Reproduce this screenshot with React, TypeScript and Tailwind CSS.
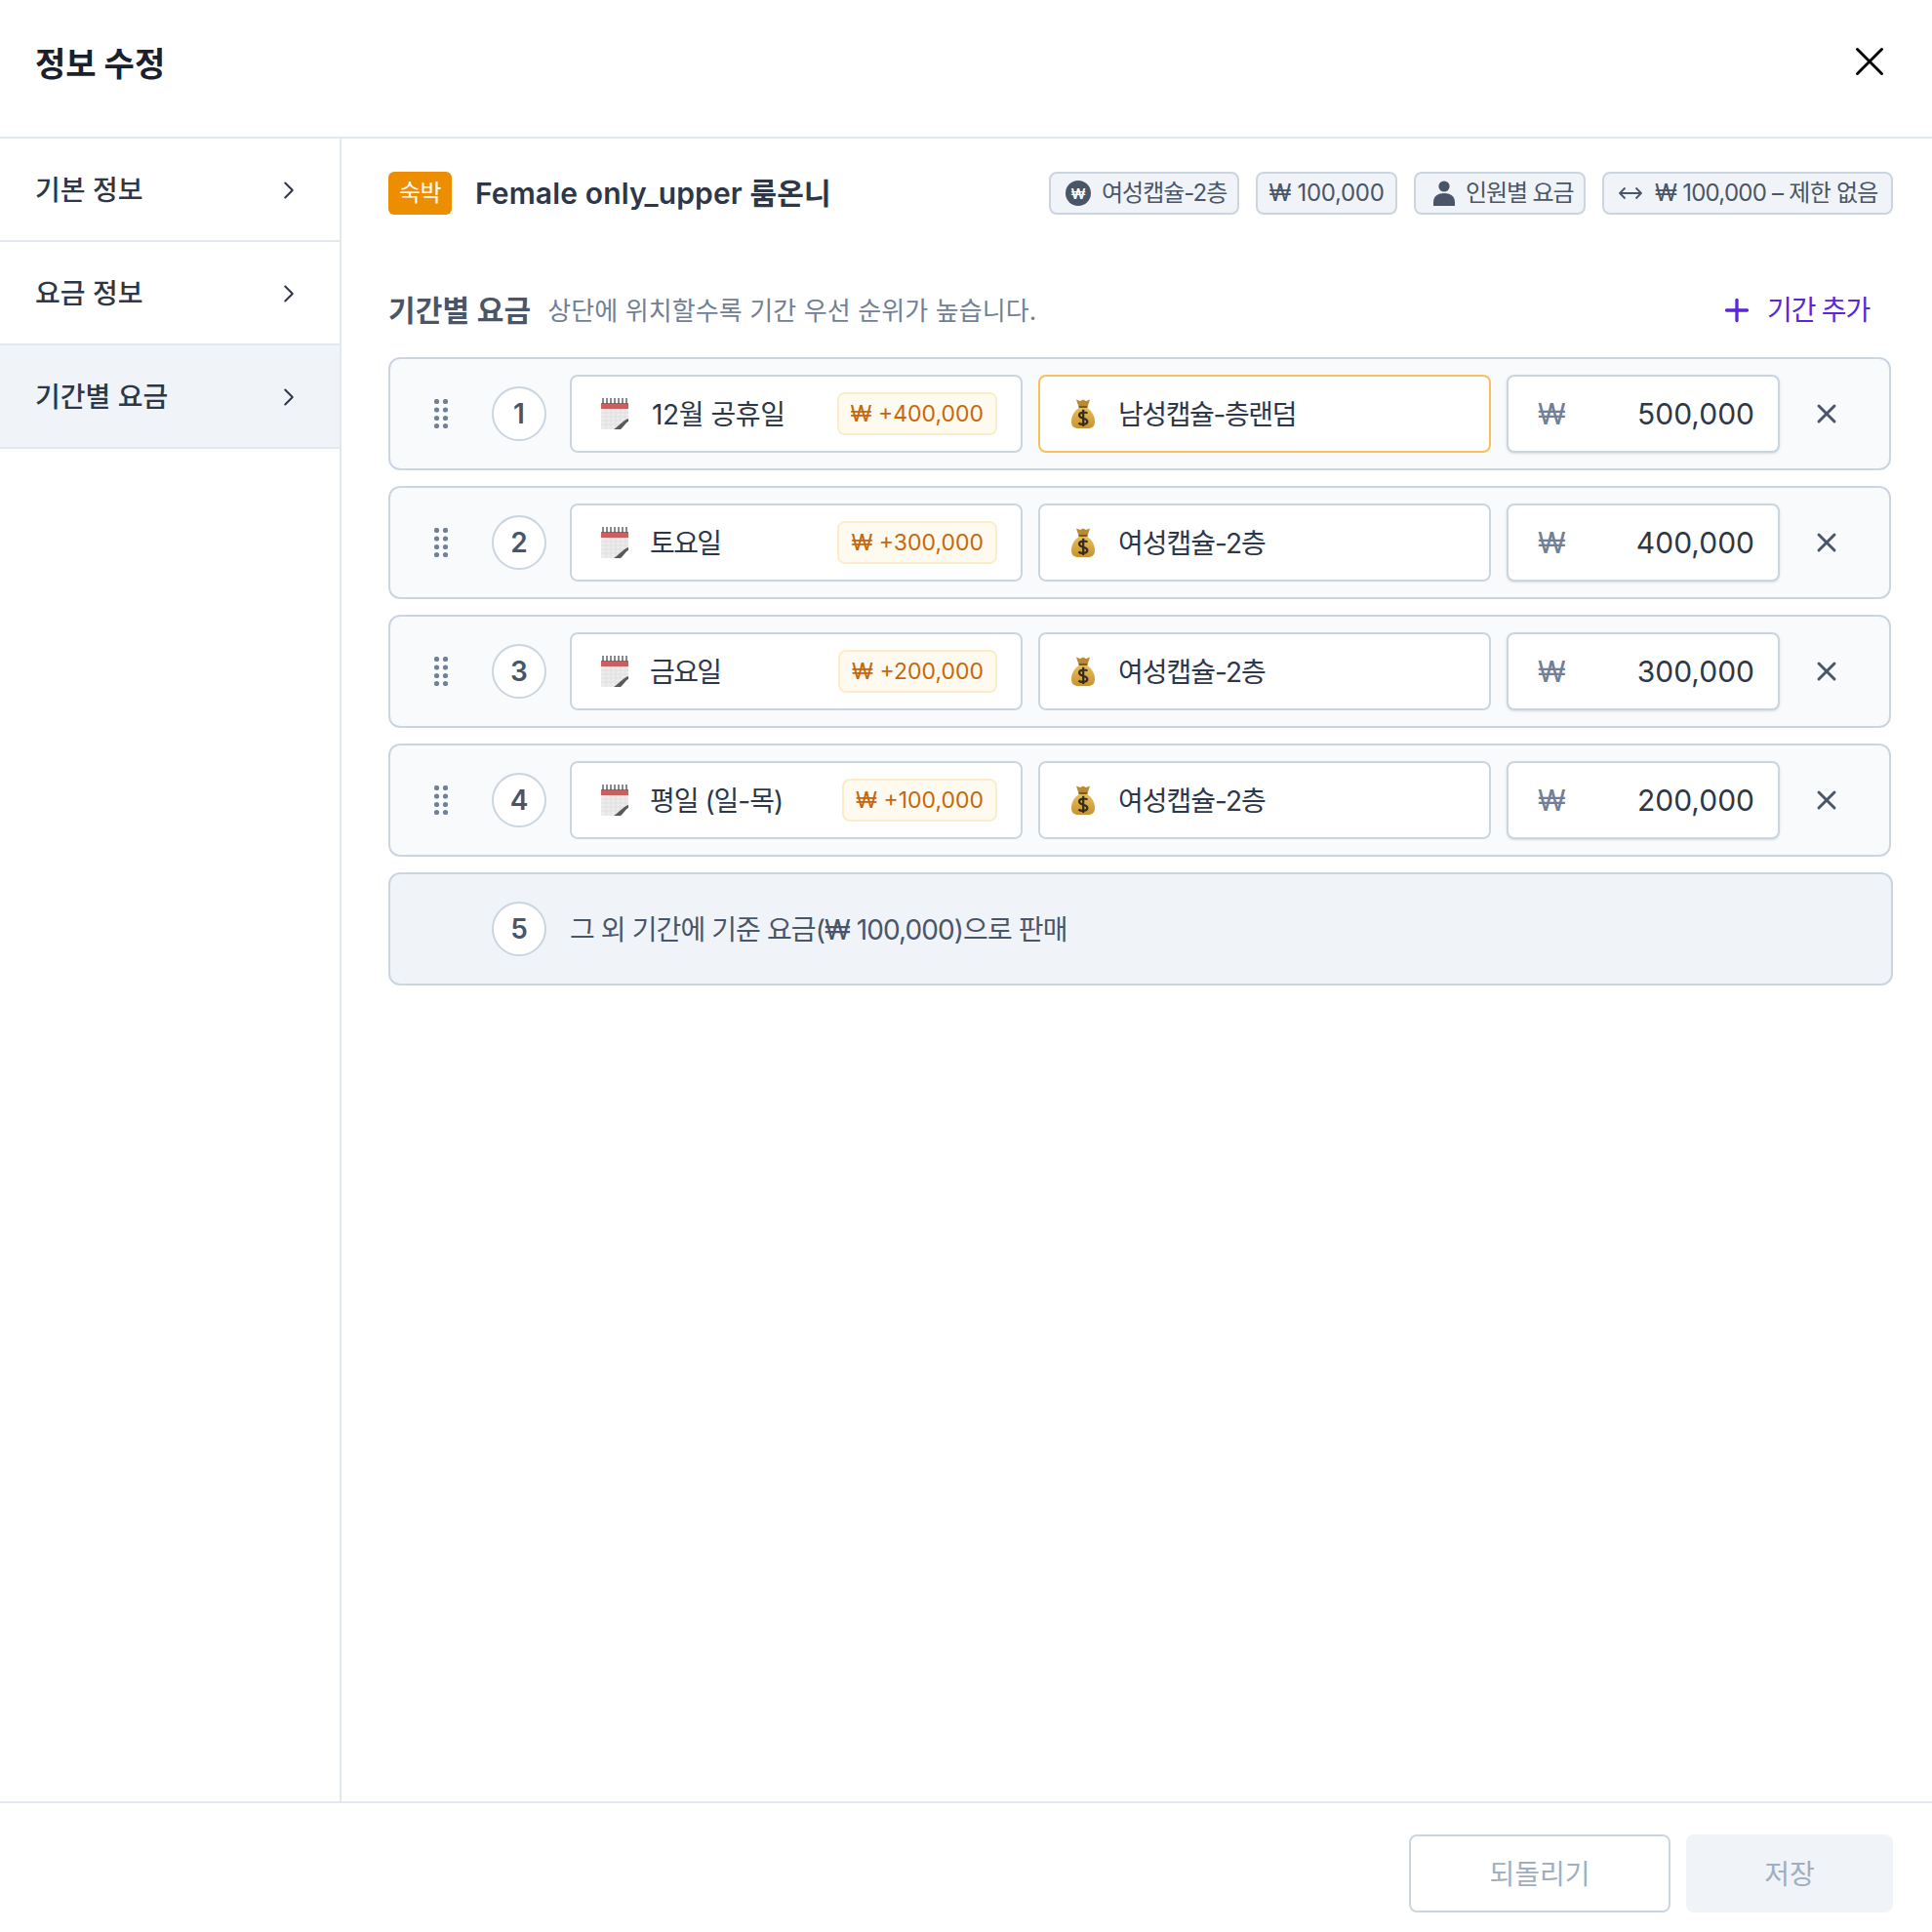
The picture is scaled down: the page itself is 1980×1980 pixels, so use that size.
import { ChevronRight, Plus, X } from 'lucide-react';

const FONT = 'font-["Inter","Noto_Sans_CJK_KR",sans-serif]';

const NAV = [
  { label: '기본 정보', active: false },
  { label: '요금 정보', active: false },
  { label: '기간별 요금', active: true },
];

const PERIODS = [
  { no: 1, name: '12월 공휴일', nameClass: 'ml-[2px] pt-[2px] tracking-[-0.4px]', extra: '₩ +400,000', room: '남성캡슐-층랜덤', roomClass: 'pt-[2px] tracking-[-1.4px]', price: '500,000', focused: true },
  { no: 2, name: '토요일', nameClass: 'pt-[2px] tracking-[-1.6px]', extra: '₩ +300,000', room: '여성캡슐-2층', roomClass: 'pt-[2px] tracking-[-1px]', price: '400,000', focused: false },
  { no: 3, name: '금요일', nameClass: 'pt-[2px] tracking-[-1.6px]', extra: '₩ +200,000', room: '여성캡슐-2층', roomClass: 'pt-[2px] tracking-[-1px]', price: '300,000', focused: false },
  { no: 4, name: '평일 (일-목)', nameClass: 'pt-[2px] tracking-[-1px]', extra: '₩ +100,000', room: '여성캡슐-2층', roomClass: 'pt-[2px] tracking-[-1px]', price: '200,000', focused: false },
];

function CalendarIcon() {
  return (
    <svg width="28" height="32" viewBox="0 0 28 32" className="shrink-0">
      <rect x="0" y="5" width="28" height="27" fill="#ececec" />
      <rect x="0" y="5" width="28" height="6" fill="#c9605f" />
      {[2, 6, 10, 14, 18, 22, 26].map((x) => (
        <rect key={x} x={x - 0.7} y="0" width="1.4" height="6" fill="#555b63" />
      ))}
      {[15, 19, 23, 27].map((y) => (
        <line key={y} x1="0" x2="28" y1={y} y2={y} stroke="#dcdcdc" strokeWidth="0.7" />
      ))}
      {[5, 10, 15, 20, 25].map((x) => (
        <line key={x} x1={x} x2={x} y1="11" y2="32" stroke="#dcdcdc" strokeWidth="0.7" />
      ))}
      <path d="M28 24 C25 25 24 29 20 32 L28 32 Z" fill="#ffffff" />
      <path d="M28 21 C24 22 20 27 13 32 L20 32 C23 30 25 25 28 24 Z" fill="#5a5a5a" />
    </svg>
  );
}

function MoneyBagIcon() {
  return (
    <svg width="24" height="30" viewBox="0 0 24 30" className="shrink-0">
      <defs>
        <linearGradient id="bag" x1="0" y1="0" x2="0" y2="1">
          <stop offset="0" stopColor="#e6bd5c" />
          <stop offset="1" stopColor="#c8922e" />
        </linearGradient>
      </defs>
      <path d="M5 0.5 L9 2 L12 0.5 L15 2 L19 0.5 L16.5 8 L7.5 8 Z" fill="#b98a2f" />
      <rect x="7.5" y="7" width="9" height="2.4" rx="1" fill="#7e5a1b" />
      <path d="M8 9 C3 12 0 17 0 23 C0 28 3 30 7 30 L17 30 C21 30 24 28 24 23 C24 17 21 12 16 9 Z" fill="url(#bag)" />
      <path d="M16.4 14.6 C15 13 8 12.8 8 16.6 C8 20.6 16.4 19 16.4 23 C16.4 26.6 9.4 26.6 7.4 24.4 M12.2 10.8 L12.2 28" fill="none" stroke="#332c20" strokeWidth="2.2" />
    </svg>
  );
}

function GripIcon() {
  return (
    <svg width="14" height="30" viewBox="0 0 14 30" fill="#718096" className="shrink-0">
      {[2.5, 11, 19.5, 27.5].map((y) => (
        <g key={y}>
          <circle cx="2.5" cy={y} r="2.6" />
          <circle cx="11.5" cy={y} r="2.6" />
        </g>
      ))}
    </svg>
  );
}

function PersonIcon() {
  return (
    <svg width="24" height="26" viewBox="0 0 24 26" fill="#4a5568" className="shrink-0">
      <circle cx="12" cy="6" r="5.6" />
      <path d="M1 26 L1 22 C1 16 6 13 12 13 C18 13 23 16 23 22 L23 26 Z" />
    </svg>
  );
}

function ArrowsIcon() {
  return (
    <svg width="24" height="14" viewBox="0 0 24 14" fill="none" stroke="#4a5568" strokeWidth="1.8" className="shrink-0">
      <path d="M1 7 L23 7 M6.5 1.5 L1 7 L6.5 12.5 M17.5 1.5 L23 7 L17.5 12.5" />
    </svg>
  );
}

function Chip({ children, className }: { children: React.ReactNode; className: string }) {
  return (
    <div className={`flex h-[44px] items-center rounded-[8px] border-2 border-[#cbd5e0] bg-[#f0f4f8] text-[24px] leading-none text-[#4a5568] ${className}`}>
      {children}
    </div>
  );
}

function NumberBadge({ no }: { no: number }) {
  return (
    <div className="flex h-[56px] w-[56px] shrink-0 items-center justify-center rounded-full border-2 border-[#cbd5e0] bg-white text-[28px] font-semibold text-[#4a5568]">
      {no}
    </div>
  );
}

function PeriodRow({ no, name, nameClass, extra, room, roomClass, price, focused }: (typeof PERIODS)[number]) {
  return (
    <div className="flex h-[116px] w-[1540px] items-center rounded-[12px] border-2 border-[#cbd5e0] bg-[#f8fafc]">
      <div className="ml-[45px] flex w-[59px] shrink-0">
        <GripIcon />
      </div>
      <NumberBadge no={no} />
      <div className="ml-[24px] flex h-[80px] w-[464px] shrink-0 items-center justify-between rounded-[8px] border-2 border-[#cbd5e0] bg-white pl-[30px] pr-[24px]">
        <div className="flex items-center gap-[22px] text-[28px] text-[#2d3748]">
          <CalendarIcon />
          <span className={nameClass}>{name}</span>
        </div>
        <div className="flex h-[44px] items-center rounded-[8px] border-2 border-[#feebc8] bg-[#fffaf0] px-[12px] text-[23px] text-[#c7670a]">
          {extra}
        </div>
      </div>
      <div className={`ml-[16px] flex h-[80px] w-[464px] shrink-0 items-center gap-[24px] rounded-[8px] border-2 bg-white pl-[32px] text-[28px] text-[#2d3748] ${focused ? 'border-[#f6c05f]' : 'border-[#cbd5e0]'}`}>
        <MoneyBagIcon />
        <span className={roomClass}>{room}</span>
      </div>
      <div className="ml-[16px] flex h-[80px] w-[280px] shrink-0 items-center justify-between rounded-[8px] border-2 border-[#cbd5e0] bg-white pl-[30px] pr-[24px] shadow-sm">
        <span className="text-[30px] text-[#718096]">₩</span>
        <span className="text-[30px] text-[#2d3748]">{price}</span>
      </div>
      <button className="ml-[36px] flex h-[24px] w-[24px] shrink-0 items-center justify-center text-[#4a5568]">
        <X size={32} strokeWidth={2.2} className="shrink-0" />
      </button>
    </div>
  );
}

export default function App() {
  return (
    <div className={`flex h-[1980px] w-[1980px] flex-col bg-white ${FONT}`}>
      <header className="flex h-[142px] shrink-0 items-center justify-between border-b-2 border-[#e2e8f0] pb-[14px] pl-[36px] pr-[39px]">
        <h1 className="pt-[4px] text-[34px] font-bold text-[#1a202c]">정보 수정</h1>
        <X size={50} strokeWidth={1.4} className="text-black" />
      </header>

      <div className="flex min-h-0 flex-1">
        <aside className="w-[350px] shrink-0 border-r-2 border-[#e2e8f0]">
          {NAV.map((item) => (
            <div
              key={item.label}
              className={`flex h-[106px] items-center justify-between border-b-2 border-[#e2e8f0] pl-[36px] pr-[37px] pt-[2px] text-[28px] font-medium text-[#2d3748] ${item.active ? 'bg-[#f0f4f8]' : ''}`}
            >
              <span>{item.label}</span>
              <ChevronRight size={30} strokeWidth={1.6} className="text-[#2d3748]" />
            </div>
          ))}
        </aside>

        <main className="min-w-0 flex-1 pl-[48px] pr-[40px] pt-[34px]">
          <div className="flex h-[44px] items-center justify-between">
            <div className="flex items-center">
              <span className="flex h-[44px] w-[65px] items-center justify-center rounded-[6px] bg-[#ed8e00] text-[24px] tracking-[-0.5px] text-white">숙박</span>
              <span className="ml-[24px] text-[30px] font-semibold tracking-[0.15px] text-[#2d3748]">Female only_upper 룸온니</span>
            </div>
            <div className="flex items-center gap-[17px]">
              <Chip className="w-[195px] gap-[11px] pl-[15px]">
                <span className="flex h-[26px] w-[26px] items-center justify-center rounded-full bg-[#4a5568] text-[15px] font-semibold text-white">₩</span>
                <span className="tracking-[-1px]">여성캡슐-2층</span>
              </Chip>
              <Chip className="w-[145px] justify-center tracking-[-0.3px]">₩ 100,000</Chip>
              <Chip className="w-[176px] gap-[10px] pl-[17px]">
                <PersonIcon />
                <span className="tracking-[-1.1px]">인원별 요금</span>
              </Chip>
              <Chip className="w-[298px] gap-[13px] pl-[15px]">
                <ArrowsIcon />
                <span className="tracking-[-0.75px]">₩ 100,000 – 제한 없음</span>
              </Chip>
            </div>
          </div>

          <div className="mt-[70px] flex h-[56px] items-center justify-between pr-[24px]">
            <div className="flex items-center gap-[17px]">
              <span className="text-[30px] font-bold tracking-[0.2px] text-[#4a5568]">기간별 요금</span>
              <span className="text-[26px] tracking-[0.1px] text-[#718096]">상단에 위치할수록 기간 우선 순위가 높습니다.</span>
            </div>
            <button className="flex items-center gap-[13px] text-[28px] text-[#5a26d9]">
              <Plus size={36} strokeWidth={2.2} />
              <span className="tracking-[-1.2px]">기간 추가</span>
            </button>
          </div>

          <div className="mt-[20px] flex flex-col gap-[16px]">
            {PERIODS.map((p) => (
              <PeriodRow key={p.no} {...p} />
            ))}
            <div className="flex h-[116px] items-center rounded-[12px] border-2 border-[#cbd5e0] bg-[#f0f4f8] pl-[104px]">
              <NumberBadge no={5} />
              <span className="ml-[24px] pt-[2px] text-[28px] tracking-[-0.9px] text-[#4a5568]">그 외 기간에 기준 요금(₩ 100,000)으로 판매</span>
            </div>
          </div>
        </main>
      </div>

      <footer className="flex h-[134px] shrink-0 items-start justify-end gap-[16px] border-t-2 border-[#e2e8f0] pr-[40px] pt-[32px]">
        <button className="h-[80px] w-[268px] rounded-[8px] border-2 border-[#cbd5e0] bg-white pt-[2px] text-[28px] text-[#a0aec0]">되돌리기</button>
        <button className="h-[80px] w-[212px] rounded-[8px] bg-[#f0f4f8] pt-[2px] text-[28px] text-[#a0aec0]">저장</button>
      </footer>
    </div>
  );
}
